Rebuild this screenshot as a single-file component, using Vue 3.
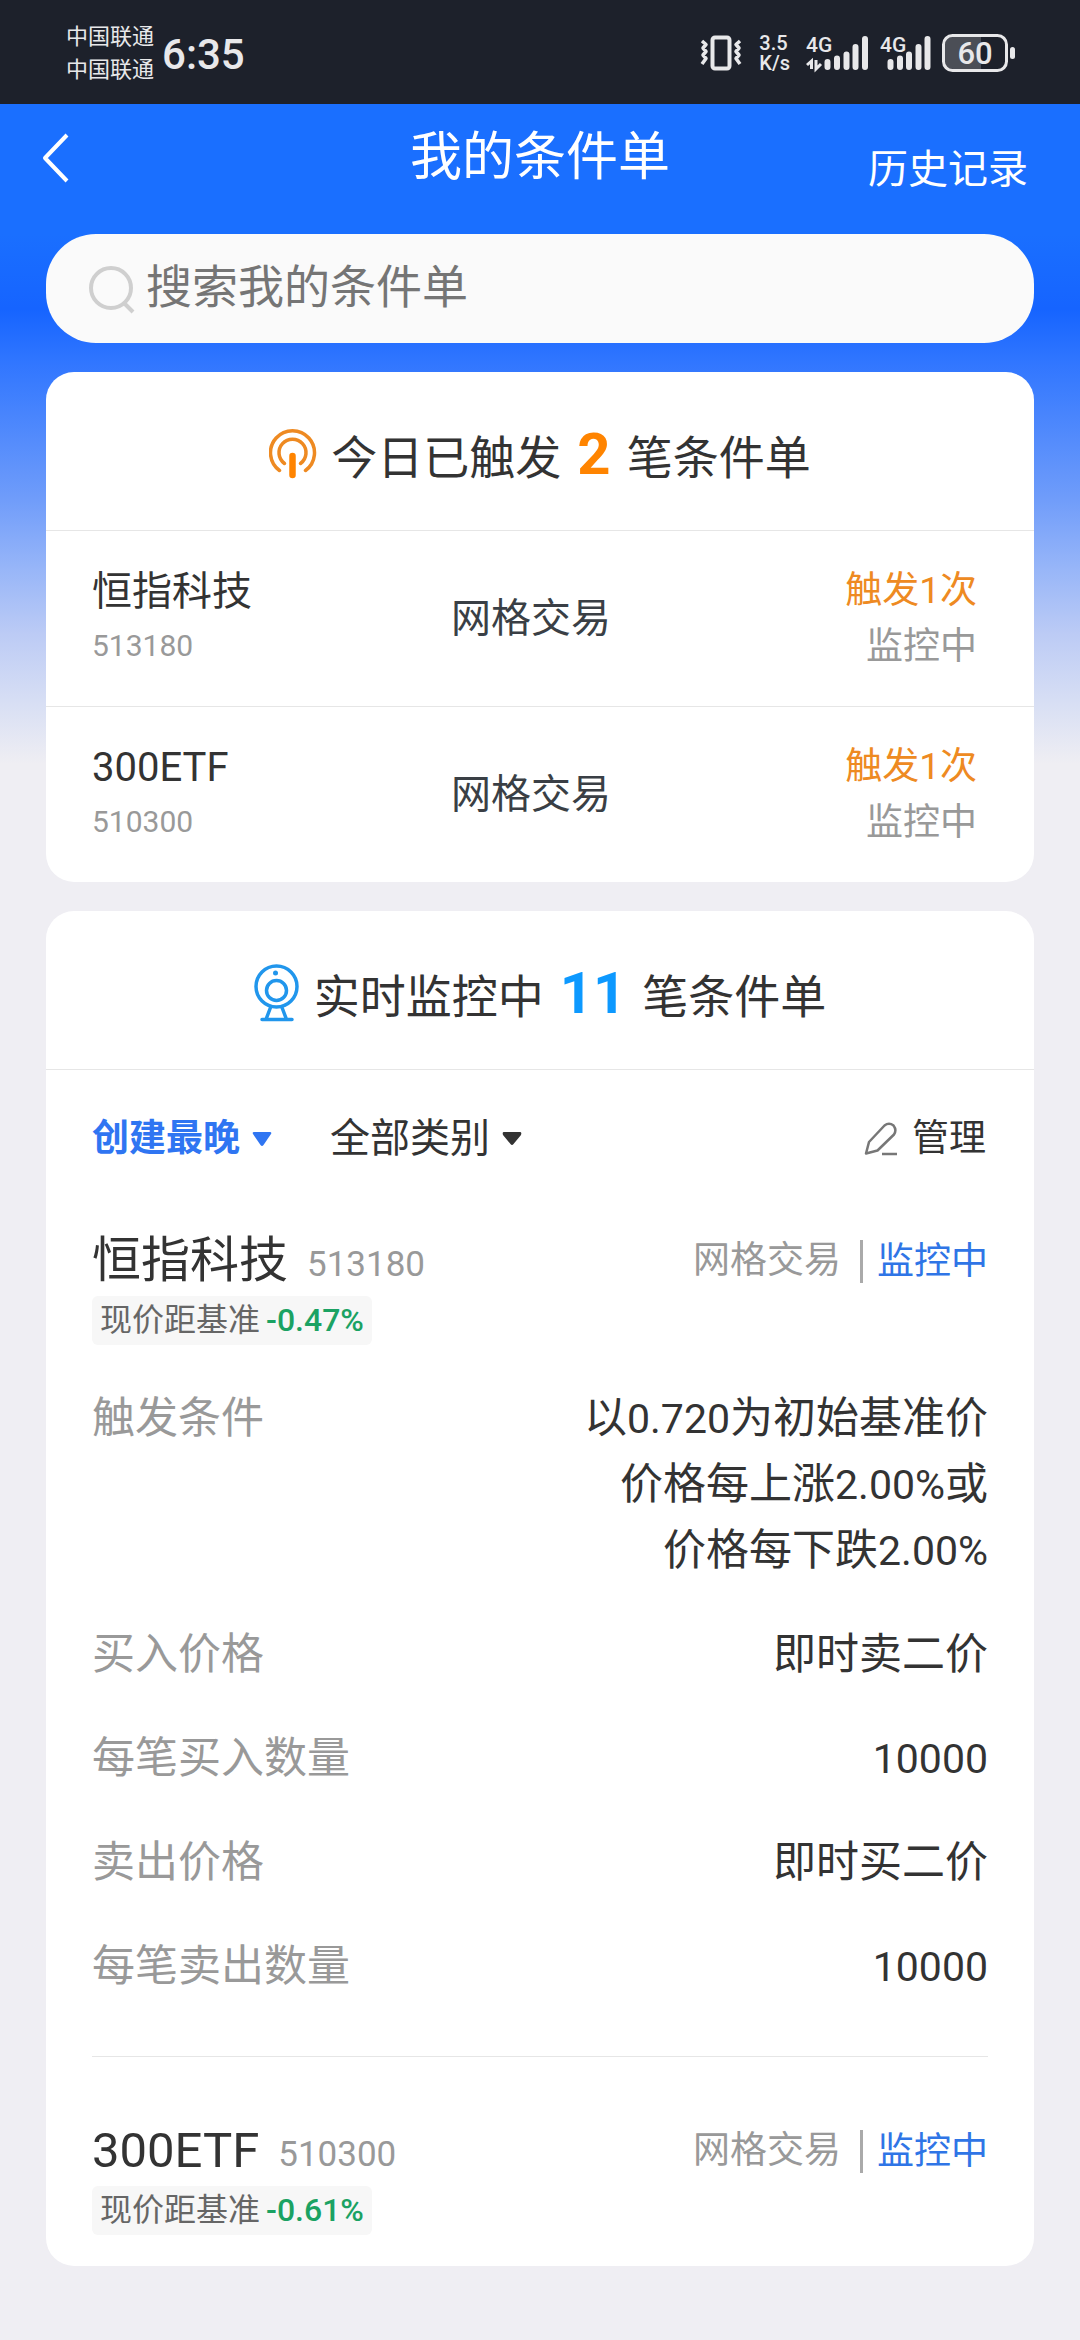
<script setup>
import { ref } from 'vue'

const keyword = ref('')
const sort = ref('创建最晚')
const category = ref('全部类别')

const sortOptions = ['创建最晚', '创建最早']
const categoryOptions = ['全部类别', '网格交易']

const triggered = [
  { name: '恒指科技', code: '513180', type: '网格交易', times: '触发1次', status: '监控中' },
  { name: '300ETF', code: '510300', type: '网格交易', times: '触发1次', status: '监控中' },
]

const orders = [
  {
    name: '恒指科技',
    code: '513180',
    type: '网格交易',
    status: '监控中',
    change: '-0.47%',
    details: [
      { label: '触发条件', lines: ['以0.720为初始基准价', '价格每上涨2.00%或', '价格每下跌2.00%'] },
      { label: '买入价格', lines: ['即时卖二价'] },
      { label: '每笔买入数量', lines: ['10000'] },
      { label: '卖出价格', lines: ['即时买二价'] },
      { label: '每笔卖出数量', lines: ['10000'] },
    ],
  },
  {
    name: '300ETF',
    code: '510300',
    type: '网格交易',
    status: '监控中',
    change: '-0.61%',
    details: [],
  },
]

// Splits a line into numeric and plain runs so figures get their own style.
const runs = (line) => line.split(/([\d.]+%?)/).filter(Boolean)
const isFigure = (run) => /^[\d.]/.test(run)
</script>

<template>
  <div class="page">
    <div class="status-bar">
      <div class="carriers">
        <span>中国联通</span>
        <span>中国联通</span>
      </div>
      <span class="clock">6:35</span>
      <div class="indicators">
        <svg class="vibrate" width="42" height="36" viewBox="0 0 42 36" aria-hidden="true">
          <rect x="12.5" y="2.5" width="17" height="31" rx="2.5" fill="none" stroke="currentColor" stroke-width="4" />
          <path d="M2 6L6 9.500L3 13L6 16.500L3 20L6 23.500L2 29M40 6L36 9.500L39 13L36 16.500L39 20L36 23.500L40 29" fill="none" stroke="currentColor" stroke-width="3.500" stroke-linejoin="round" />
        </svg>
        <div class="speed">
          <span>3.5</span>
          <span>K/s</span>
        </div>
        <svg class="signal" width="62" height="48" viewBox="0 -6 62 48" aria-hidden="true">
          <text x="0" y="17">4G</text>
          <path d="M5.500 34V26L1 30M10 25V34L15 29" fill="none" stroke="currentColor" stroke-width="3" />
          <path d="M21.500 27V32M31 23.500V32M40.500 19.500V32M49.500 12V32M59 4V32" stroke="currentColor" stroke-width="6" stroke-linecap="round" />
        </svg>
        <svg class="signal second" width="52" height="48" viewBox="0 -6 52 48" aria-hidden="true">
          <text x="0" y="17">4G</text>
          <path d="M10.500 27V32M20 23.500V32M29 19.500V32M38.500 12V32M47.500 4V32" stroke="currentColor" stroke-width="6" stroke-linecap="round" />
        </svg>
        <svg class="battery" width="74" height="38" viewBox="0 0 74 38" aria-hidden="true">
          <path d="M11 3H39V35H11Q3 35 3 27V11Q3 3 11 3Z" fill="#4b4e56" />
          <rect x="1.500" y="1.500" width="63" height="35" rx="9" fill="none" stroke="currentColor" stroke-width="3" />
          <rect x="68" y="13" width="5" height="12" rx="2.500" fill="currentColor" />
          <text x="33" y="30" text-anchor="middle">60</text>
        </svg>
      </div>
    </div>

    <main class="screen">
      <header class="nav">
        <button class="back" type="button" aria-label="返回">
          <svg width="28" height="50" viewBox="0 0 28 50">
            <path d="M25 2L3 25L25 48" fill="none" stroke="currentColor" stroke-width="4" stroke-linejoin="round" />
          </svg>
        </button>
        <h1>我的条件单</h1>
        <a class="history" href="#history">历史记录</a>
      </header>

      <label class="search">
        <svg width="48" height="50" viewBox="0 0 48 50" aria-hidden="true">
          <circle cx="23" cy="24" r="20" fill="none" stroke="currentColor" stroke-width="4" />
          <path d="M36 39L45 48" stroke="currentColor" stroke-width="4" />
        </svg>
        <input v-model="keyword" type="search" placeholder="搜索我的条件单" aria-label="搜索我的条件单" />
      </label>

      <section class="card">
        <h2 class="card-head">
          <svg width="48" height="50" viewBox="0 0 48 50" fill="none" stroke="#ee8a22" stroke-linecap="round" aria-hidden="true">
            <path d="M10.500 41.500A22 22 0 1 1 36.500 41.500" stroke-width="3.500" />
            <path d="M15.500 34.500A13.500 13.500 0 1 1 31.500 34.500" stroke-width="3.500" />
            <path d="M23.500 27V46" stroke="#ff8400" stroke-width="6.500" />
          </svg>
          <span>今日已触发</span>
          <strong class="hot">2</strong>
          <span>笔条件单</span>
        </h2>
        <ul class="triggered">
          <li v-for="item in triggered" :key="item.code">
            <div class="cell">
              <span class="name">{{ item.name }}</span>
              <span class="code">{{ item.code }}</span>
            </div>
            <span class="type">{{ item.type }}</span>
            <div class="cell end">
              <span class="times">{{ item.times }}</span>
              <span class="state">{{ item.status }}</span>
            </div>
          </li>
        </ul>
      </section>

      <section class="card">
        <h2 class="card-head">
          <svg width="46" height="58" viewBox="0 0 46 58" fill="none" stroke="#2196ec" stroke-width="3.500" stroke-linecap="round" aria-hidden="true">
            <circle cx="22.500" cy="22.500" r="20.500" />
            <circle cx="22.500" cy="26.500" r="10" />
            <circle cx="21.500" cy="9" r="2.500" fill="#2196ec" stroke="none" />
            <path d="M16.500 43.500L12.500 54M28 43.500L32 54M8 55.500H38" />
          </svg>
          <span>实时监控中</span>
          <strong class="cool">11</strong>
          <span>笔条件单</span>
        </h2>

        <div class="filters">
          <label class="filter active">
            <select v-model="sort" aria-label="排序">
              <option v-for="o in sortOptions" :key="o">{{ o }}</option>
            </select>
            <svg width="20" height="16" viewBox="0 0 20 16" aria-hidden="true">
              <path d="M2 1H18Q20 1 19 3L11.500 14Q10 16 8.500 14L1 3Q0 1 2 1Z" fill="currentColor" />
            </svg>
          </label>
          <label class="filter">
            <select v-model="category" aria-label="类别">
              <option v-for="o in categoryOptions" :key="o">{{ o }}</option>
            </select>
            <svg width="20" height="14" viewBox="0 0 20 14" aria-hidden="true">
              <path d="M2 0H18Q20 0 19 3L11.500 12Q10 14 8.500 12L1 3Q0 0 2 0Z" fill="currentColor" />
            </svg>
          </label>
          <button class="manage" type="button">
            <svg width="34" height="34" viewBox="0 0 34 34" fill="none" stroke="#777" stroke-width="2.500" stroke-linejoin="round" aria-hidden="true">
              <path d="M2 31.500L5 20L20.500 3.500Q25 0 29.500 3.500Q33 8 30 12.500L13.500 28.500Z" />
              <path d="M18 32H33" />
            </svg>
            <span>管理</span>
          </button>
        </div>

        <article v-for="order in orders" :key="order.code" class="order">
          <div class="order-head">
            <h3>{{ order.name }}</h3>
            <span class="order-code">{{ order.code }}</span>
            <span class="order-type">{{ order.type }}</span>
            <span class="order-status">{{ order.status }}</span>
          </div>
          <p class="tag">
            <span>现价距基准</span>
            <span class="change">{{ order.change }}</span>
          </p>
          <dl v-if="order.details.length">
            <div v-for="d in order.details" :key="d.label" class="detail">
              <dt>{{ d.label }}</dt>
              <dd>
                <div v-for="line in d.lines" :key="line">
                  <span v-for="(run, i) in runs(line)" :key="i" :class="{ figure: isFigure(run) }">{{ run }}</span>
                </div>
              </dd>
            </div>
          </dl>
        </article>
      </section>
    </main>
  </div>
</template>

<style>
body {
  margin: 0;
  background: #efeef3;
}
</style>

<style scoped>
.page {
  min-height: 100vh;
  font-family: Roboto, "Noto Sans CJK SC", sans-serif;
  color: #333;
  background: #efeef3;
}

h1, h2, h3, p, ul, dl, dd {
  margin: 0;
  padding: 0;
  font-weight: 400;
}

button, input, select {
  appearance: none;
  margin: 0;
  padding: 0;
  border: 0;
  outline: 0;
  background: none;
  font: inherit;
  color: inherit;
}

svg {
  display: block;
  flex: none;
}

.status-bar {
  box-sizing: border-box;
  display: flex;
  align-items: center;
  height: 104px;
  padding: 2px 64px 0 66px;
  color: #e8e8ea;
  background: #1d212b;
}

.carriers {
  display: flex;
  flex-direction: column;
  font-size: 22px;
  line-height: 33px;
}

.clock {
  margin-left: 8px;
  padding-top: 4px;
  font-size: 42px;
  line-height: 52px;
  font-weight: 500;
}

.indicators {
  display: flex;
  align-items: center;
  margin-left: auto;
}

.speed {
  display: flex;
  flex-direction: column;
  margin: 0 16px 0 17px;
  font-size: 20px;
  line-height: 20px;
  font-weight: 500;
}

.signal text {
  font-size: 21px;
  font-weight: 500;
  fill: currentColor;
}

.second {
  margin-left: 12px;
}

.battery {
  margin-left: 10px;
}

.battery text {
  font-size: 31px;
  font-weight: 500;
  fill: currentColor;
}

.screen {
  padding: 0 46px 73px;
  background: linear-gradient(
    #1a6fff 0,
    #1a6fff 130px,
    #1664ff 205px,
    #2f75ff 255px,
    #3a7cfe 280px,
    #6f9cfa 394px,
    #98b6f8 466px,
    #bccbf5 530px,
    #d8dff4 600px,
    #efeef3 660px
  );
}

.nav {
  box-sizing: border-box;
  display: grid;
  grid-template-columns: 1fr auto 1fr;
  align-items: start;
  height: 130px;
  padding-top: 22px;
  color: #fff;
}

.back {
  justify-self: start;
  display: flex;
  align-items: center;
  height: 64px;
  margin-left: -4px;
}

.nav h1 {
  font-size: 52px;
  line-height: 64px;
}

.history {
  justify-self: end;
  margin-right: 6px;
  font-size: 40px;
  line-height: 88px;
  color: inherit;
  text-decoration: none;
}

.search {
  display: flex;
  align-items: center;
  gap: 10px;
  height: 109px;
  padding: 0 42px;
  border-radius: 50px;
  color: #cfcfcf;
  background: #fafafa;
}

.search input {
  flex: 1;
  min-width: 0;
  padding-bottom: 4px;
  font-size: 46px;
  line-height: 60px;
  color: #333;
}

.search input::placeholder {
  color: #757575;
  opacity: 1;
}

.card {
  margin-top: 29px;
  border-radius: 28px;
  background: #fff;
  overflow: hidden;
}

.card-head {
  box-sizing: border-box;
  display: flex;
  align-items: center;
  justify-content: center;
  height: 159px;
  padding-top: 6px;
  border-bottom: 1px solid #e6e6e6;
  font-size: 46px;
  line-height: 56px;
}

.card-head span {
  padding-top: 8px;
}

.card-head svg {
  margin-right: 14px;
}

.card-head strong {
  margin: 0 16px;
  font-size: 58px;
}

.hot {
  color: #ff8400;
}

.cool {
  color: #0d99ff;
}

.triggered {
  list-style: none;
}

.triggered li {
  display: grid;
  grid-template-columns: 40% 1fr auto;
  align-items: center;
  height: 175px;
  padding: 0 57px 0 46px;
  line-height: 54px;
}

.triggered li + li {
  border-top: 1px solid #e6e6e6;
}

.cell {
  display: flex;
  flex-direction: column;
}

.end {
  align-items: flex-end;
  font-size: 37px;
  line-height: 56px;
}

.name, .type {
  font-size: 40px;
}

.code {
  font-size: 30px;
  color: #999;
}

.type {
  padding-left: 5px;
  color: #3a3f45;
}

.times {
  color: #ee8a22;
}

.state {
  color: #999;
}

.filters {
  display: flex;
  align-items: center;
  height: 136px;
  padding: 2px 48px 0 46px;
  box-sizing: border-box;
  font-size: 40px;
  line-height: 56px;
}

.filter {
  display: flex;
  align-items: center;
  gap: 12px;
  margin-right: 58px;
}

.active {
  font-size: 37px;
  font-weight: 700;
  color: #2f75f2;
}

.manage {
  display: flex;
  align-items: center;
  gap: 14px;
  margin-left: auto;
  font-size: 37px;
}

.order {
  margin: 0 46px;
  padding: 22px 0 31px;
}

.order + .order {
  padding-top: 61px;
  border-top: 1px solid #e6e6e6;
}

.order:not(:last-child) {
  padding-bottom: 57px;
}

.order-head {
  display: flex;
  align-items: center;
  line-height: 66px;
}

.order-head h3 {
  font-size: 49px;
}

.order-code {
  margin-left: 19px;
  padding-top: 8px;
  font-size: 35px;
  line-height: 58px;
  color: #999;
}

.order-type {
  margin-left: auto;
  font-size: 37px;
  color: #999;
}

.order-status {
  margin-left: 19px;
  padding-left: 14px;
  border-left: 3px solid #aaa;
  font-size: 37px;
  line-height: 43px;
  color: #2f75e6;
}

.tag {
  display: flex;
  align-items: center;
  width: fit-content;
  height: 49px;
  margin-top: 2px;
  padding: 0 8px;
  border-radius: 6px;
  font-size: 32px;
  line-height: 49px;
  color: #666;
  background: #f7f7f7;
}

.change {
  margin-left: 6px;
  font-weight: 500;
  color: #1ba263;
}

dl {
  display: flex;
  flex-direction: column;
  gap: 38px;
  margin-top: 40px;
  font-size: 43px;
  line-height: 66px;
}

.detail {
  display: flex;
  justify-content: space-between;
}

dt {
  color: #999;
}

dd {
  text-align: right;
}

.figure {
  font-size: 41px;
  line-height: 41px;
}
</style>
